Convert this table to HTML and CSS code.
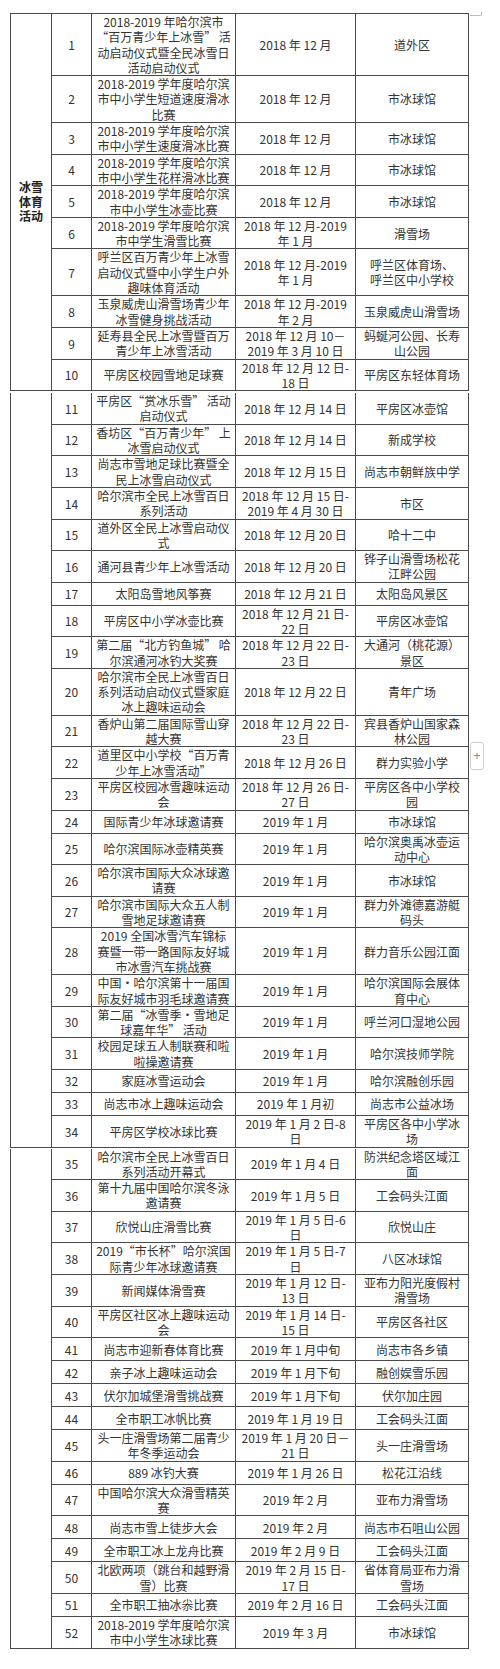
FILE: index.html
```html
<!DOCTYPE html>
<html lang="zh-CN">
<head>
<meta charset="utf-8">
<title>冰雪体育活动安排</title>
<link rel="stylesheet" href="styles.css">
</head>
<body>
<div class="page">
  <span class="corner-mark"></span>
  <table class="sched s1">
    <colgroup><col class="c-cat"><col class="c-no"><col class="c-name"><col class="c-date"><col class="c-place"></colgroup>
    <tbody>
      <tr><td class="cat" rowspan="10">冰雪<br>体育<br>活动</td><td>1</td><td>2018-2019 年哈尔滨市<br>“百万青少年上冰雪” 活<br>动启动仪式暨全民冰雪日<br>活动启动仪式</td><td>2018 年 12 月</td><td>道外区</td></tr>
      <tr><td>2</td><td>2018-2019 学年度哈尔滨<br>市中小学生短道速度滑冰<br>比赛</td><td>2018 年 12 月</td><td>市冰球馆</td></tr>
      <tr><td>3</td><td>2018-2019 学年度哈尔滨<br>市中小学生速度滑冰比赛</td><td>2018 年 12 月</td><td>市冰球馆</td></tr>
      <tr><td>4</td><td>2018-2019 学年度哈尔滨<br>市中小学生花样滑冰比赛</td><td>2018 年 12 月</td><td>市冰球馆</td></tr>
      <tr><td>5</td><td>2018-2019 学年度哈尔滨<br>市中小学生冰壶比赛</td><td>2018 年 12 月</td><td>市冰球馆</td></tr>
      <tr><td>6</td><td>2018-2019 学年度哈尔滨<br>市中学生滑雪比赛</td><td>2018 年 12 月-2019<br>年 1 月</td><td>滑雪场</td></tr>
      <tr><td>7</td><td>呼兰区百万青少年上冰雪<br>启动仪式暨中小学生户外<br>趣味体育活动</td><td>2018 年 12 月-2019<br>年 1 月</td><td>呼兰区体育场、<br>呼兰区中小学校</td></tr>
      <tr><td>8</td><td>玉泉威虎山滑雪场青少年<br>冰雪健身挑战活动</td><td>2018 年 12 月-2019<br>年 2 月</td><td>玉泉威虎山滑雪场</td></tr>
      <tr><td>9</td><td>延寿县全民上冰雪暨百万<br>青少年上冰雪活动</td><td>2018 年 12 月 10－<br>2019 年 3 月 10 日</td><td>蚂蜒河公园、长寿<br>山公园</td></tr>
      <tr><td>10</td><td>平房区校园雪地足球赛</td><td>2018 年 12 月 12 日-<br>18 日</td><td>平房区东轻体育场</td></tr>
    </tbody>
  </table>

  <table class="sched s2">
    <colgroup><col class="c-cat"><col class="c-no"><col class="c-name"><col class="c-date"><col class="c-place"></colgroup>
    <tbody>
      <tr><td class="cat" rowspan="24"></td><td>11</td><td>平房区“赏冰乐雪” 活动<br>启动仪式</td><td>2018 年 12 月 14 日</td><td>平房区冰壶馆</td></tr>
      <tr><td>12</td><td>香坊区“百万青少年” 上<br>冰雪启动仪式</td><td>2018 年 12 月 14 日</td><td>新成学校</td></tr>
      <tr><td>13</td><td>尚志市雪地足球比赛暨全<br>民上冰雪启动仪式</td><td>2018 年 12 月 15 日</td><td>尚志市朝鲜族中学</td></tr>
      <tr><td>14</td><td>哈尔滨市全民上冰雪百日<br>系列活动</td><td>2018 年 12 月 15 日-<br>2019 年 4 月 30 日</td><td>市区</td></tr>
      <tr><td>15</td><td>道外区全民上冰雪启动仪<br>式</td><td>2018 年 12 月 20 日</td><td>哈十二中</td></tr>
      <tr><td>16</td><td>通河县青少年上冰雪活动</td><td>2018 年 12 月 20 日</td><td>铧子山滑雪场松花<br>江畔公园</td></tr>
      <tr><td>17</td><td>太阳岛雪地风筝赛</td><td>2018 年 12 月 21 日</td><td>太阳岛风景区</td></tr>
      <tr><td>18</td><td>平房区中小学冰壶比赛</td><td>2018 年 12 月 21 日-<br>22 日</td><td>平房区冰壶馆</td></tr>
      <tr><td>19</td><td>第二届“北方钓鱼城” 哈<br>尔滨通河冰钓大奖赛</td><td>2018 年 12 月 22 日-<br>23 日</td><td>大通河（桃花源）<br>景区</td></tr>
      <tr><td>20</td><td>哈尔滨市全民上冰雪百日<br>系列活动启动仪式暨家庭<br>冰上趣味运动会</td><td>2018 年 12 月 22 日</td><td>青年广场</td></tr>
      <tr><td>21</td><td>香炉山第二届国际雪山穿<br>越大赛</td><td>2018 年 12 月 22 日-<br>23 日</td><td>宾县香炉山国家森<br>林公园</td></tr>
      <tr><td>22</td><td>道里区中小学校“百万青<br>少年上冰雪活动”</td><td>2018 年 12 月 26 日</td><td>群力实验小学</td></tr>
      <tr><td>23</td><td>平房区校园冰雪趣味运动<br>会</td><td>2018 年 12 月 26 日-<br>27 日</td><td>平房区各中小学校<br>园</td></tr>
      <tr><td>24</td><td>国际青少年冰球邀请赛</td><td>2019 年 1 月</td><td>市冰球馆</td></tr>
      <tr><td>25</td><td>哈尔滨国际冰壶精英赛</td><td>2019 年 1 月</td><td>哈尔滨奥禹冰壶运<br>动中心</td></tr>
      <tr><td>26</td><td>哈尔滨市国际大众冰球邀<br>请赛</td><td>2019 年 1 月</td><td>市冰球馆</td></tr>
      <tr><td>27</td><td>哈尔滨市国际大众五人制<br>雪地足球邀请赛</td><td>2019 年 1 月</td><td>群力外滩德嘉游艇<br>码头</td></tr>
      <tr><td>28</td><td>2019 全国冰雪汽车锦标<br>赛暨一带一路国际友好城<br>市冰雪汽车挑战赛</td><td>2019 年 1 月</td><td>群力音乐公园江面</td></tr>
      <tr><td>29</td><td>中国·哈尔滨第十一届国<br>际友好城市羽毛球邀请赛</td><td>2019 年 1 月</td><td>哈尔滨国际会展体<br>育中心</td></tr>
      <tr><td>30</td><td>第二届“冰雪季·雪地足<br>球嘉年华” 活动</td><td>2019 年 1 月</td><td>呼兰河口湿地公园</td></tr>
      <tr><td>31</td><td>校园足球五人制联赛和啦<br>啦操邀请赛</td><td>2019 年 1 月</td><td>哈尔滨技师学院</td></tr>
      <tr><td>32</td><td>家庭冰雪运动会</td><td>2019 年 1 月</td><td>哈尔滨融创乐园</td></tr>
      <tr><td>33</td><td>尚志市冰上趣味运动会</td><td>2019 年 1 月初</td><td>尚志市公益冰场</td></tr>
      <tr><td>34</td><td>平房区学校冰球比赛</td><td>2019 年 1 月 2 日-8<br>日</td><td>平房区各中小学冰<br>场</td></tr>
    </tbody>
  </table>

  <table class="sched s3">
    <colgroup><col class="c-cat"><col class="c-no"><col class="c-name"><col class="c-date"><col class="c-place"></colgroup>
    <tbody>
      <tr><td class="cat" rowspan="18"></td><td>35</td><td>哈尔滨市全民上冰雪百日<br>系列活动开幕式</td><td>2019 年 1 月 4 日</td><td>防洪纪念塔区域江<br>面</td></tr>
      <tr><td>36</td><td>第十九届中国哈尔滨冬泳<br>邀请赛</td><td>2019 年 1 月 5 日</td><td>工会码头江面</td></tr>
      <tr><td>37</td><td>欣悦山庄滑雪比赛</td><td>2019 年 1 月 5 日-6<br>日</td><td>欣悦山庄</td></tr>
      <tr><td>38</td><td>2019“市长杯”哈尔滨国<br>际青少年冰球邀请赛</td><td>2019 年 1 月 5 日-7<br>日</td><td>八区冰球馆</td></tr>
      <tr><td>39</td><td>新闻媒体滑雪赛</td><td>2019 年 1 月 12 日-<br>13 日</td><td>亚布力阳光度假村<br>滑雪场</td></tr>
      <tr><td>40</td><td>平房区社区冰上趣味运动<br>会</td><td>2019 年 1 月 14 日-<br>15 日</td><td>平房区各社区</td></tr>
      <tr><td>41</td><td>尚志市迎新春体育比赛</td><td>2019 年 1 月中旬</td><td>尚志市各乡镇</td></tr>
      <tr><td>42</td><td>亲子冰上趣味运动会</td><td>2019 年 1 月下旬</td><td>融创娱雪乐园</td></tr>
      <tr><td>43</td><td>伏尔加城堡滑雪挑战赛</td><td>2019 年 1 月下旬</td><td>伏尔加庄园</td></tr>
      <tr><td>44</td><td>全市职工冰帆比赛</td><td>2019 年 1 月 19 日</td><td>工会码头江面</td></tr>
      <tr><td>45</td><td>头一庄滑雪场第二届青少<br>年冬季运动会</td><td>2019 年 1 月 20 日－<br>21 日</td><td>头一庄滑雪场</td></tr>
      <tr><td>46</td><td>889 冰钓大赛</td><td>2019 年 1 月 26 日</td><td>松花江沿线</td></tr>
      <tr><td>47</td><td>中国哈尔滨大众滑雪精英<br>赛</td><td>2019 年 2 月</td><td>亚布力滑雪场</td></tr>
      <tr><td>48</td><td>尚志市雪上徒步大会</td><td>2019 年 2 月</td><td>尚志市石咀山公园</td></tr>
      <tr><td>49</td><td>全市职工冰上龙舟比赛</td><td>2019 年 2 月 9 日</td><td>工会码头江面</td></tr>
      <tr><td>50</td><td>北欧两项（跳台和越野滑<br>雪）比赛</td><td>2019 年 2 月 15 日-<br>17 日</td><td>省体育局亚布力滑<br>雪场</td></tr>
      <tr><td>51</td><td>全市职工抽冰尜比赛</td><td>2019 年 2 月 16 日</td><td>工会码头江面</td></tr>
      <tr><td>52</td><td>2018-2019 学年度哈尔滨<br>市中小学生冰球比赛</td><td>2019 年 3 月</td><td>市冰球馆</td></tr>
    </tbody>
  </table>

  <span class="add-row">+</span>
</div>
</body>
</html>
```

FILE: styles.css
```css
html, body {
  margin: 0;
  padding: 0;
  background: #ffffff;
}

body {
  font-family: "Noto Sans CJK SC", "Liberation Sans", sans-serif;
  font-size: 12px;
  color: #333333;
}

.page {
  position: relative;
  width: 500px;
  padding: 13px 0 24px 10px;
  box-sizing: border-box;
}

.sched {
  border-collapse: collapse;
  table-layout: fixed;
  width: 458px;
}

.c-cat { width: 41px; }
.c-no { width: 40px; }
.c-name { width: 144px; }
.c-date { width: 120px; }
.c-place { width: 113px; }

.sched td {
  border: 1px solid #4a4a4a;
  padding: 0 1px;
  height: 22px;
  line-height: 15.3px;
  text-align: center;
  vertical-align: middle;
  white-space: nowrap;
  overflow: visible;
}

.sched td.cat {
  font-weight: bold;
  font-size: 12px;
  line-height: 14.5px;
  color: #222222;
}

.s2 {
  margin-top: 2px;
}

.s3 {
  margin-top: 1px;
}

.s2 tr:first-child td,
.s3 tr:first-child td {
  border-top: none;
}

.add-row {
  position: absolute;
  left: 470px;
  top: 742px;
  width: 12px;
  height: 26px;
  border: 1px solid #cfcfcf;
  border-radius: 3px;
  background: #ffffff;
  color: #8a8a8a;
  font-family: "Liberation Sans", sans-serif;
  font-size: 12px;
  line-height: 26px;
  text-align: center;
}

.corner-mark {
  position: absolute;
  left: 470px;
  top: 12px;
  width: 11px;
  height: 3px;
  border-bottom: 1px solid #bdbdbd;
  border-right: 1px solid #bdbdbd;
  border-bottom-right-radius: 2px;
}
```
